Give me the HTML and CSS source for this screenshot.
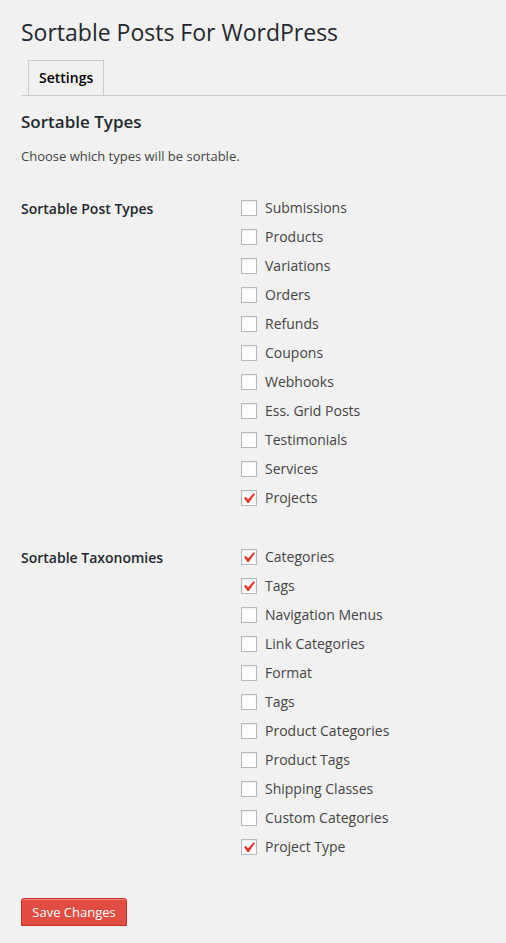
FILE: index.html
```html
<!DOCTYPE html>
<html>
<head>
<meta charset="utf-8">
<link rel="stylesheet" href="styles.css">
</head>
<body>
<div class="wrap">
  <h1 class="title">Sortable Posts For WordPress</h1>
  <div class="tabs"><span class="tab">Settings</span></div>
  <h2 class="section">Sortable Types</h2>
  <p class="desc">Choose which types will be sortable.</p>
  <div class="form">
    <div class="th">Sortable Post Types</div>
    <div class="td">
      <label class="row"><span class="cb"></span>Submissions</label>
      <label class="row"><span class="cb"></span>Products</label>
      <label class="row"><span class="cb"></span>Variations</label>
      <label class="row"><span class="cb"></span>Orders</label>
      <label class="row"><span class="cb"></span>Refunds</label>
      <label class="row"><span class="cb"></span>Coupons</label>
      <label class="row"><span class="cb"></span>Webhooks</label>
      <label class="row"><span class="cb"></span>Ess. Grid Posts</label>
      <label class="row"><span class="cb"></span>Testimonials</label>
      <label class="row"><span class="cb"></span>Services</label>
      <label class="row"><span class="cb checked"><svg viewBox="0 0 20 20" class="chk"><path d="M14.83 4.89l1.34.94-5.81 8.38H9.02L5.78 9.67l1.34-1.25 2.57 2.4z"/></svg></span>Projects</label>
    </div>
    <div class="th">Sortable Taxonomies</div>
    <div class="td">
      <label class="row"><span class="cb checked"><svg viewBox="0 0 20 20" class="chk"><path d="M14.83 4.89l1.34.94-5.81 8.38H9.02L5.78 9.67l1.34-1.25 2.57 2.4z"/></svg></span>Categories</label>
      <label class="row"><span class="cb checked"><svg viewBox="0 0 20 20" class="chk"><path d="M14.83 4.89l1.34.94-5.81 8.38H9.02L5.78 9.67l1.34-1.25 2.57 2.4z"/></svg></span>Tags</label>
      <label class="row"><span class="cb"></span>Navigation Menus</label>
      <label class="row"><span class="cb"></span>Link Categories</label>
      <label class="row"><span class="cb"></span>Format</label>
      <label class="row"><span class="cb"></span>Tags</label>
      <label class="row"><span class="cb"></span>Product Categories</label>
      <label class="row"><span class="cb"></span>Product Tags</label>
      <label class="row"><span class="cb"></span>Shipping Classes</label>
      <label class="row"><span class="cb"></span>Custom Categories</label>
      <label class="row"><span class="cb checked"><svg viewBox="0 0 20 20" class="chk"><path d="M14.83 4.89l1.34.94-5.81 8.38H9.02L5.78 9.67l1.34-1.25 2.57 2.4z"/></svg></span>Project Type</label>
    </div>
  </div>
  <div class="submit"><button class="btn">Save Changes</button></div>
</div>
</body>
</html>
```
FILE: styles.css
```css
html, body {
  margin: 0;
  padding: 0;
  background: #f1f1f1;
}
body {
  font-family: "Open Sans", sans-serif;
  color: #444;
  font-size: 13px;
}
.wrap {
  padding: 18px 0 0 21px;
}
.title {
  margin: 0;
  font-size: 23px;
  font-weight: 400;
  line-height: 29px;
  color: #23282d;
}
.tabs {
  margin-top: 13px;
  border-bottom: 1px solid #ccc;
  display: flex;
  padding-left: 7px;
  height: 35px;
}
.tab {
  display: block;
  border: 1px solid #ccc;
  border-bottom: none;
  background: #f1f1f1;
  padding: 5px 10px;
  height: 24px;
  line-height: 24px;
  font-size: 14px;
  font-weight: 600;
  color: #000;
  margin-bottom: -1px;
}
.section {
  margin: 14px 0 0;
  font-size: 17px;
  font-weight: 600;
  line-height: 23px;
  color: #23282d;
}
.desc {
  margin: 13px 0 0;
  font-size: 13px;
  line-height: 20px;
  color: #444;
}
.form {
  margin-top: 27px;
  display: grid;
  grid-template-columns: 220px 1fr;
  row-gap: 30px;
}
.th {
  font-size: 14px;
  font-weight: 600;
  color: #23282d;
  line-height: 18px;
  padding-top: 7px;
}
.td {
  display: flex;
  flex-direction: column;
}
.row {
  display: flex;
  align-items: center;
  height: 29px;
  font-size: 14px;
  color: #444;
}
.cb {
  position: relative;
  box-sizing: border-box;
  width: 16px;
  height: 16px;
  border: 1px solid #b4b9be;
  background: #fefefe;
  box-shadow: inset 0 1px 2px rgba(0,0,0,0.07);
  margin-right: 8px;
  flex: none;
}
.chk {
  position: absolute;
  left: -4px;
  top: -3px;
  width: 21px;
  height: 21px;
  fill: #e0372e;
}
.submit {
  margin-top: 37px;
}
.btn {
  font-family: "Open Sans", sans-serif;
  font-size: 13px;
  height: 28px;
  line-height: 26px;
  padding: 0 10px 1px;
  width: 106px;
  color: #fff;
  background: #e14d43;
  border: 1px solid #d02c21;
  border-radius: 3px;
  box-shadow: inset 0 1px 0 #ec8a85, 0 1px 0 #d02c21;
  cursor: pointer;
}
```
